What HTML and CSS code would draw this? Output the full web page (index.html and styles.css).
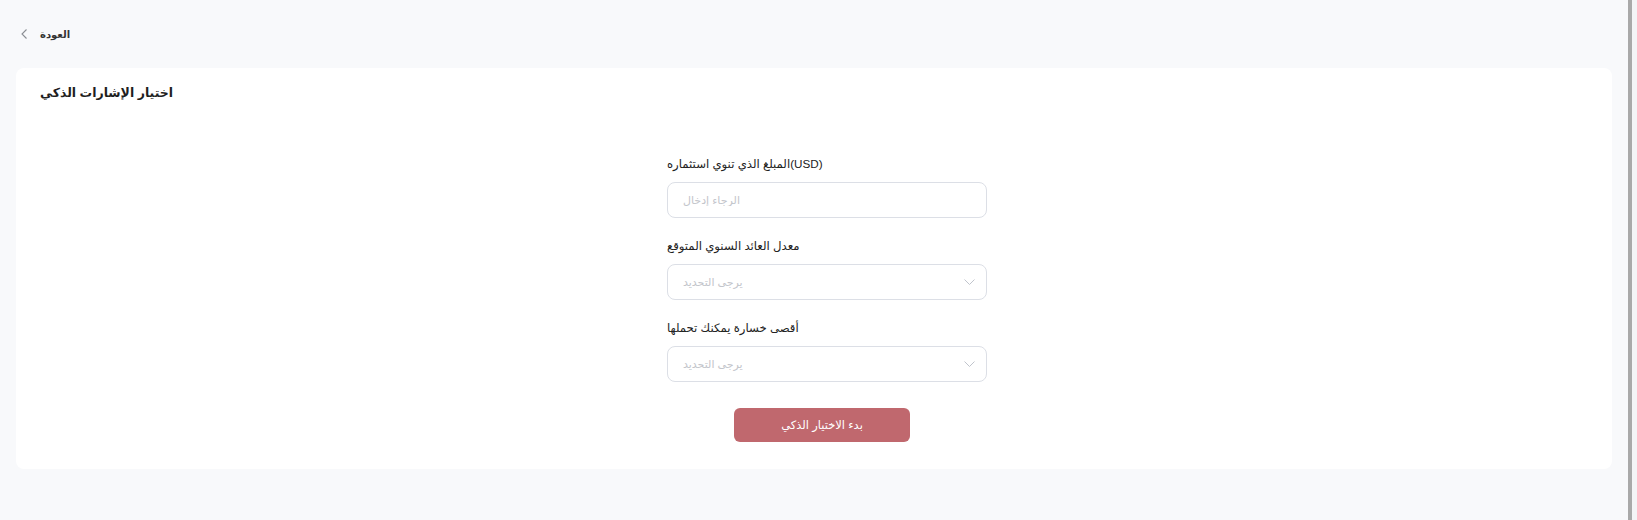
FILE: index.html
```html
<!DOCTYPE html>
<html lang="ar">
<head>
<meta charset="utf-8">
<title>اختيار الإشارات الذكي</title>
<link rel="stylesheet" href="styles.css">
</head>
<body>
  <div class="main">
    <a class="back" href="#">
      <svg class="back-icon" width="6" height="10" viewBox="0 0 6 10"><path d="M5.5 0.5 L1 5 L5.5 9.5" fill="none" stroke="#8a8d93" stroke-width="1.1"/></svg>
      <span class="back-text">العودة</span>
    </a>
    <section class="card">
      <h1 class="card-title">اختيار الإشارات الذكي</h1>
      <div class="form-wrap">
        <form class="form">
          <div class="form-item">
            <label class="form-label">المبلغ الذي تنوي استثماره(USD)</label>
            <div class="field">
              <input class="field-input" type="text" placeholder="الرجاء إدخال">
            </div>
          </div>
          <div class="form-item">
            <label class="form-label">معدل العائد السنوي المتوقع</label>
            <div class="field select">
              <span class="placeholder">يرجى التحديد</span>
              <svg class="arrow" width="11" height="6" viewBox="0 0 11 6"><path d="M0.5 0.5 L5.5 5.5 L10.5 0.5" fill="none" stroke="#c0c4cc" stroke-width="1"/></svg>
            </div>
          </div>
          <div class="form-item">
            <label class="form-label">أقصى خسارة يمكنك تحملها</label>
            <div class="field select">
              <span class="placeholder">يرجى التحديد</span>
              <svg class="arrow" width="11" height="6" viewBox="0 0 11 6"><path d="M0.5 0.5 L5.5 5.5 L10.5 0.5" fill="none" stroke="#c0c4cc" stroke-width="1"/></svg>
            </div>
          </div>
          <button class="submit" type="button">بدء الاختيار الذكي</button>
        </form>
      </div>
    </section>
  </div>
  <div class="splitter"></div>
</body>
</html>
```

FILE: styles.css
```css
html, body {
  margin: 0;
  height: 100%;
}

body {
  display: flex;
  overflow: hidden;
  font-family: "Liberation Sans", "DejaVu Sans", sans-serif;
  color: #222;
  background: #f8f9fb;
}

.main {
  flex: 1;
  padding: 0 16px;
  background: #f8f9fb;
}

.splitter {
  width: 5px;
  border-left: 4px solid #a9a9a9;
  background: #f4f4f6;
}

.back {
  display: flex;
  align-items: center;
  gap: 13px;
  height: 20px;
  margin-top: 24px;
  padding-left: 5px;
  text-decoration: none;
  color: #333;
}

.back-text {
  font-size: 10px;
  font-weight: bold;
}

.card {
  margin-top: 24px;
  padding: 16px 24px 27px 24px;
  background: #fff;
  border-radius: 8px;
}

.card-title {
  margin: 0;
  font-size: 12.5px;
  line-height: 18px;
  font-weight: bold;
  color: #1f1f1f;
}

.form-wrap {
  display: flex;
  justify-content: center;
  margin-top: 52px;
}

.form {
  width: 320px;
  padding-left: 26px;
}

.form-item {
  margin-bottom: 18px;
}

.form-item:last-of-type {
  margin-bottom: 26px;
}

.form-label {
  display: block;
  height: 20px;
  margin-bottom: 8px;
  font-size: 11.7px;
  line-height: 20px;
  color: #222;
}

.field {
  display: flex;
  align-items: center;
  height: 36px;
  box-sizing: border-box;
  border: 1px solid #dcdfe6;
  border-radius: 8px;
  padding: 0 11px 0 15px;
  background: #fff;
}

.field-input {
  flex: 1;
  border: none;
  outline: none;
  padding: 0;
  font: inherit;
  font-size: 11px;
  background: transparent;
}

.field-input::placeholder,
.placeholder {
  color: #c3c5cb;
  font-size: 11px;
}

.select {
  justify-content: space-between;
}

.submit {
  display: block;
  width: 176px;
  height: 34px;
  margin-left: 67px;
  border: none;
  border-radius: 6px;
  background: #c0686e;
  color: #fff;
  font-family: inherit;
  font-size: 11.5px;
}
```
